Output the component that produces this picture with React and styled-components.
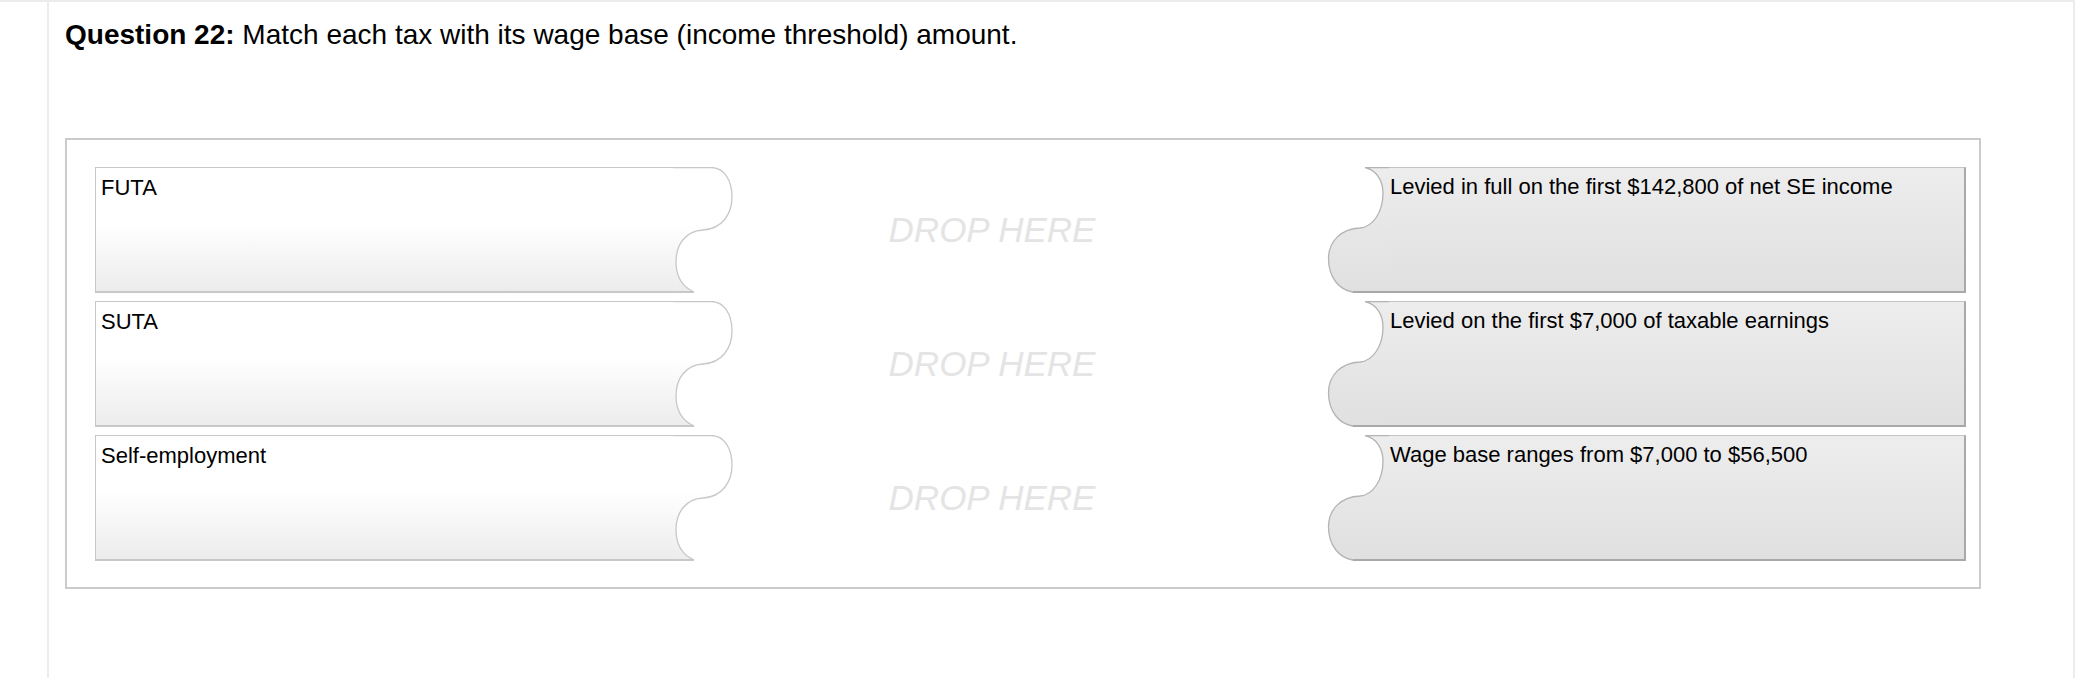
import styled, { createGlobalStyle } from "styled-components";

const GlobalStyle = createGlobalStyle`
  body {
    margin: 0;
    background: #fff;
    font-family: "Liberation Sans", Arial, sans-serif;
    color: #000;
  }
`;

const Page = styled.div`
  width: 2075px;
  height: 678px;
  box-sizing: border-box;
  border-top: 2px solid #ececec;
`;

const Panel = styled.div`
  margin-left: 47px;
  height: 100%;
  box-sizing: border-box;
  border-left: 2px solid #ececec;
  border-right: 2px solid #ececec;
  padding: 17px 0 0 16px;
`;

const Question = styled.p`
  margin: 0;
  font-size: 28px;
  line-height: 32px;
  b {
    font-weight: bold;
  }
`;

const Board = styled.div`
  margin-top: 87px;
  width: 1916px;
  box-sizing: border-box;
  border: 2px solid #cbcbcb;
  padding: 27px 13px 26px 28px;
  display: flex;
  flex-direction: column;
  gap: 8px;
`;

const Row = styled.div`
  display: grid;
  grid-template-columns: 640px 1fr 639px;
  height: 126px;
`;

const Card = styled.div`
  display: flex;
  height: 126px;
`;

const TermBody = styled.div`
  flex: 1;
  box-sizing: border-box;
  border: 1px solid #c8c8c8;
  border-right: none;
  border-bottom: 2px solid #c8c8c8;
  background: linear-gradient(to bottom, #fff 0%, #fff 45%, #ececec 100%);
  padding: 7px 5px;
  font-size: 22px;
  line-height: 25px;
`;

const AnswerBody = styled.div`
  flex: 1;
  box-sizing: border-box;
  border-top: 1px solid #c4c4c4;
  border-right: 2px solid #a9a9a9;
  border-bottom: 2px solid #a9a9a9;
  background: linear-gradient(to bottom, #ededed 0%, #e0e0e0 100%);
  padding: 6px 1px;
  font-size: 22px;
  line-height: 25px;
`;

const Tab = styled.svg`
  display: block;
  flex: none;
`;

const DropZone = styled.div`
  display: flex;
  align-items: center;
  justify-content: center;
  padding-right: 78px;
  font-size: 35px;
  font-style: italic;
  color: #e4e4e4;
`;

const TermTab = ({ id }) => (
  <Tab width="62" height="126" viewBox="0 0 62 126">
    <defs>
      <linearGradient id={id} x1="0" y1="0" x2="0" y2="126" gradientUnits="userSpaceOnUse">
        <stop offset="0" stopColor="#fff" />
        <stop offset="0.45" stopColor="#fff" />
        <stop offset="1" stopColor="#ececec" />
      </linearGradient>
    </defs>
    <path
      d="M0,0 H38 C51,0.5 59,13 59,30 C59,47 49,62 30,63 C12,64 3,78 3,95 C3,110 10,120 21,126 L0,126 Z"
      fill={`url(#${id})`}
    />
    <path
      d="M0,0.5 H38 C51,0.5 59,13 59,30 C59,47 49,62 30,63 C12,64 3,78 3,95 C3,110 10,120 21,125"
      fill="none"
      stroke="#c8c8c8"
      strokeWidth="1.3"
    />
    <path d="M0,125 H21" stroke="#c8c8c8" strokeWidth="2" />
  </Tab>
);

const AnswerTab = ({ id }) => (
  <Tab width="62" height="126" viewBox="0 0 62 126">
    <defs>
      <linearGradient id={id} x1="0" y1="0" x2="0" y2="126" gradientUnits="userSpaceOnUse">
        <stop offset="0" stopColor="#ededed" />
        <stop offset="1" stopColor="#e0e0e0" />
      </linearGradient>
    </defs>
    <path
      d="M62,0 H38 C49,3 56,13 56,26 C56,45 46,60 33,61 C14,62 1.5,74 1.5,92 C1.5,110 12,123 26,126 H62 Z"
      fill={`url(#${id})`}
    />
    <path
      d="M62,0.5 H38 C49,3 56,13 56,26 C56,45 46,60 33,61 C14,62 1.5,74 1.5,92 C1.5,110 12,123 26,125"
      fill="none"
      stroke="#b4b4b4"
      strokeWidth="1.3"
    />
    <path d="M26,125 H62" stroke="#a9a9a9" strokeWidth="2" />
  </Tab>
);

const pairs = [
  { term: "FUTA", answer: "Levied in full on the first $142,800 of net SE income" },
  { term: "SUTA", answer: "Levied on the first $7,000 of taxable earnings" },
  { term: "Self-employment", answer: "Wage base ranges from $7,000 to $56,500" },
];

const App = () => {
  return (
    <>
      <GlobalStyle />
      <Page>
        <Panel>
          <Question>
            <b>Question 22:</b> Match each tax with its wage base (income threshold) amount.
          </Question>
          <Board>
            {pairs.map((p, i) => (
              <Row key={p.term}>
                <Card>
                  <TermBody>{p.term}</TermBody>
                  <TermTab id={`tg${i}`} />
                </Card>
                <DropZone>DROP HERE</DropZone>
                <Card>
                  <AnswerTab id={`ag${i}`} />
                  <AnswerBody>{p.answer}</AnswerBody>
                </Card>
              </Row>
            ))}
          </Board>
        </Panel>
      </Page>
    </>
  );
};

export default App;
